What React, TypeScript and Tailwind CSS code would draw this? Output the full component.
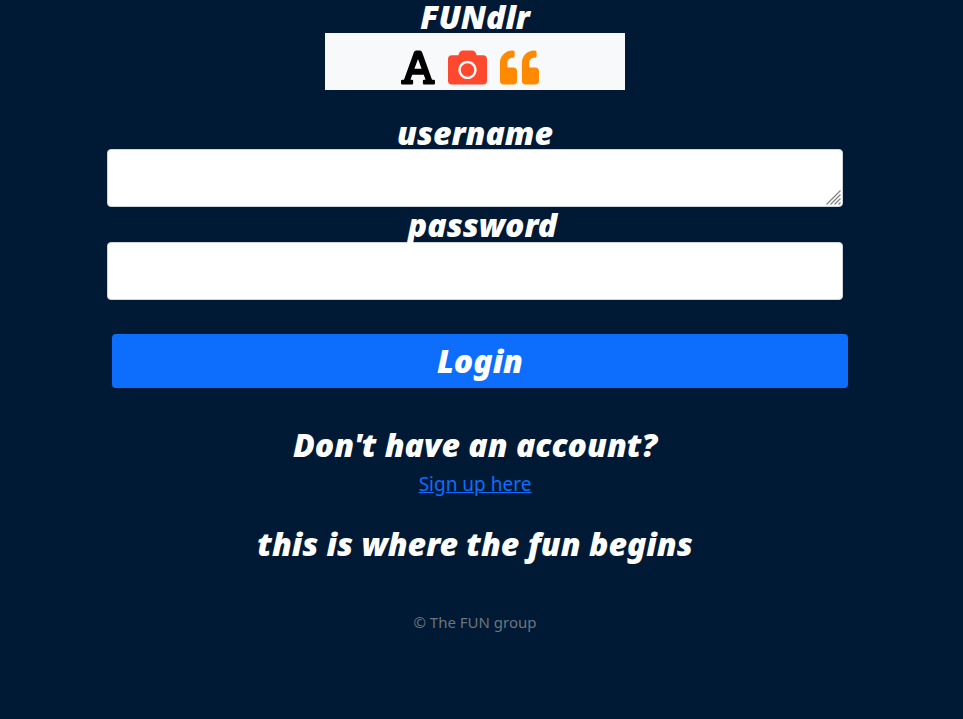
import { FaCamera, FaFont, FaQuoteLeft } from "react-icons/fa";

const display = "font-['Noto_Sans',sans-serif] font-black italic text-white text-center text-[32px]";
const field =
  "block h-[58px] w-full rounded border border-[#ced4da] bg-white px-3 py-2 text-[20px] text-[#212529]";

function Header() {
  return (
    <header className="flex flex-col items-center">
      <h1 className={`${display} leading-[33px]`}>FUNdlr</h1>
      <div className="flex h-[57px] w-[300px] items-center justify-center gap-[13px] bg-[#f8f9fa] pt-3 pr-[10px] text-[39px]">
        <FaFont className="h-[39px] w-[34px] text-black" aria-hidden="true" />
        <FaCamera className="text-[#ff492f]" aria-hidden="true" />
        <FaQuoteLeft className="text-[#ff8a00]" aria-hidden="true" />
      </div>
    </header>
  );
}

function Grip() {
  return (
    <svg
      className="pointer-events-none absolute right-[2px] bottom-[2px] h-[15px] w-[15px]"
      viewBox="0 0 15 15"
      stroke="#808080"
      strokeWidth="1.2"
      aria-hidden="true"
    >
      <path d="M0.5 14.5 14.5 0.5M4.5 14.5 14.5 4.5M8.5 14.5 14.5 8.5M12.5 14.5 14.5 12.5" />
    </svg>
  );
}

function LoginForm() {
  return (
    <form className="mt-[26px] flex flex-col" onSubmit={(e) => e.preventDefault()}>
      <div className="px-[107px]">
        <label htmlFor="username" className={`${display} block leading-[33px]`}>
          username
        </label>
        <div className="relative">
          <textarea id="username" className={`${field} resize-none`} />
          <Grip />
        </div>
        <label htmlFor="password" className={`${display} block pl-[15px] leading-[35px]`}>
          password
        </label>
        <input id="password" type="password" className={field} />
      </div>
      <div className="mt-[34px] pr-[102px] pl-[112px]">
        <button type="submit" className={`${display} block h-[54px] w-full rounded bg-[#0d6efd] leading-[54px]`}>
          Login
        </button>
      </div>
    </form>
  );
}

export default function App() {
  return (
    <div className="min-h-screen bg-[#001a35] pr-[13px] font-['Noto_Sans',sans-serif]">
      <Header />
      <main>
        <LoginForm />
        <section className="mt-[37px] text-center">
          <h2 className={`${display} leading-[40px]`}>Don't have an account?</h2>
          <a href="#signup" className="mt-1 inline-block text-[19px] leading-[30px] text-[#0d6efd] underline">
            Sign up here
          </a>
        </section>
        <h2 className={`${display} mt-[25px] leading-[40px]`}>this is where the fun begins</h2>
      </main>
      <footer className="mt-[46px] text-center text-[15px] leading-6 text-[#6c757d]">© The FUN group</footer>
    </div>
  );
}
